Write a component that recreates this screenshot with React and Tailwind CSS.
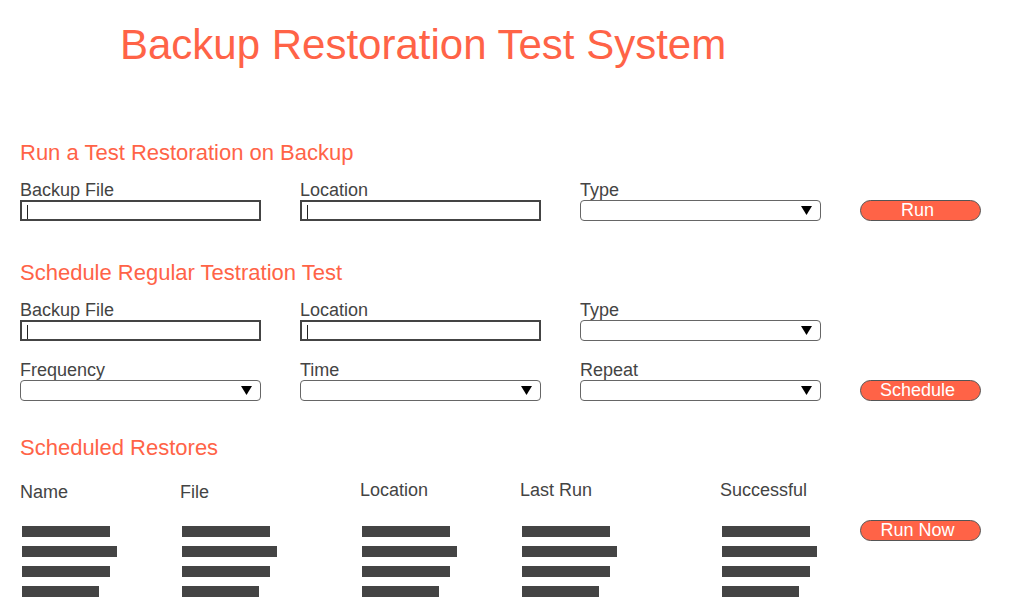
import React from 'react';

const font = { fontFamily: '"Liberation Sans", Arial, sans-serif' };

function TextInput() {
  return (
    <div className="relative h-[21px] w-[241px] border-2 border-[#444] bg-white">
      <div className="absolute left-[5px] top-[3px] h-[14px] w-px bg-[#222]" />
    </div>
  );
}

function Select() {
  return (
    <div className="flex h-[21px] w-[241px] items-center justify-end rounded-[4px] border border-[#666] bg-white pr-[8px]">
      <svg width="11" height="9" viewBox="0 0 11 9">
        <polygon points="0,0 11,0 5.5,9" fill="#000" />
      </svg>
    </div>
  );
}

function Button({ children }) {
  return (
    <button className="h-[21px] w-[121px] rounded-full border border-[#555] bg-[#ff6347] pr-[6px] text-[18px] leading-[19px] text-white">
      {children}
    </button>
  );
}

function Field({ label, children }) {
  return (
    <div className="flex flex-col">
      <div className="h-[20px] text-[18px] leading-[20px] text-[#444]">{label}</div>
      {children}
    </div>
  );
}

function Heading({ children, className = '' }) {
  return <h2 className={`h-[24px] text-[22px] leading-[24px] text-[#ff6347] ${className}`}>{children}</h2>;
}

const barWidths = [88, 95, 88, 77];

function Bars() {
  return (
    <div className="ml-[2px] flex flex-col gap-[9px]">
      {barWidths.map((w, i) => (
        <div key={i} className="h-[11px] bg-[#444]" style={{ width: w }} />
      ))}
    </div>
  );
}

export default function App() {
  return (
    <div className="h-[600px] w-[1024px] overflow-hidden bg-white pl-[20px]" style={font}>
      <h1 className="ml-[100px] pt-[21px] text-[42px] leading-[48px] text-[#ff6347]">
        Backup Restoration Test System
      </h1>

      {/* Run a test restoration */}
      <Heading className="mt-[72px]">Run a Test Restoration on Backup</Heading>
      <div className="mt-[15px] grid grid-cols-[241px_241px_241px_121px] items-end gap-x-[39px]">
        <Field label="Backup File"><TextInput /></Field>
        <Field label="Location"><TextInput /></Field>
        <Field label="Type"><Select /></Field>
        <Button>Run</Button>
      </div>

      {/* Schedule */}
      <Heading className="mt-[40px]">Schedule Regular Testration Test</Heading>
      <div className="mt-[15px] grid grid-cols-[241px_241px_241px_121px] items-end gap-x-[39px] gap-y-[19px]">
        <Field label="Backup File"><TextInput /></Field>
        <Field label="Location"><TextInput /></Field>
        <Field label="Type"><Select /></Field>
        <div />
        <Field label="Frequency"><Select /></Field>
        <Field label="Time"><Select /></Field>
        <Field label="Repeat"><Select /></Field>
        <Button>Schedule</Button>
      </div>

      {/* Scheduled restores */}
      <Heading className="mt-[35px]">Scheduled Restores</Heading>
      <div className="mt-[20px] grid grid-cols-[160px_180px_160px_200px_140px_121px] text-[18px] leading-[20px] text-[#444]">
        <div className="pt-[2px]">Name</div>
        <div className="pt-[2px]">File</div>
        <div>Location</div>
        <div>Last Run</div>
        <div>Successful</div>
        <div />
      </div>
      <div className="mt-[24px] grid grid-cols-[160px_180px_160px_200px_140px_121px] items-start">
        <Bars />
        <Bars />
        <Bars />
        <Bars />
        <Bars />
        <div className="-mt-[7px]">
          <Button>Run Now</Button>
        </div>
      </div>
    </div>
  );
}
